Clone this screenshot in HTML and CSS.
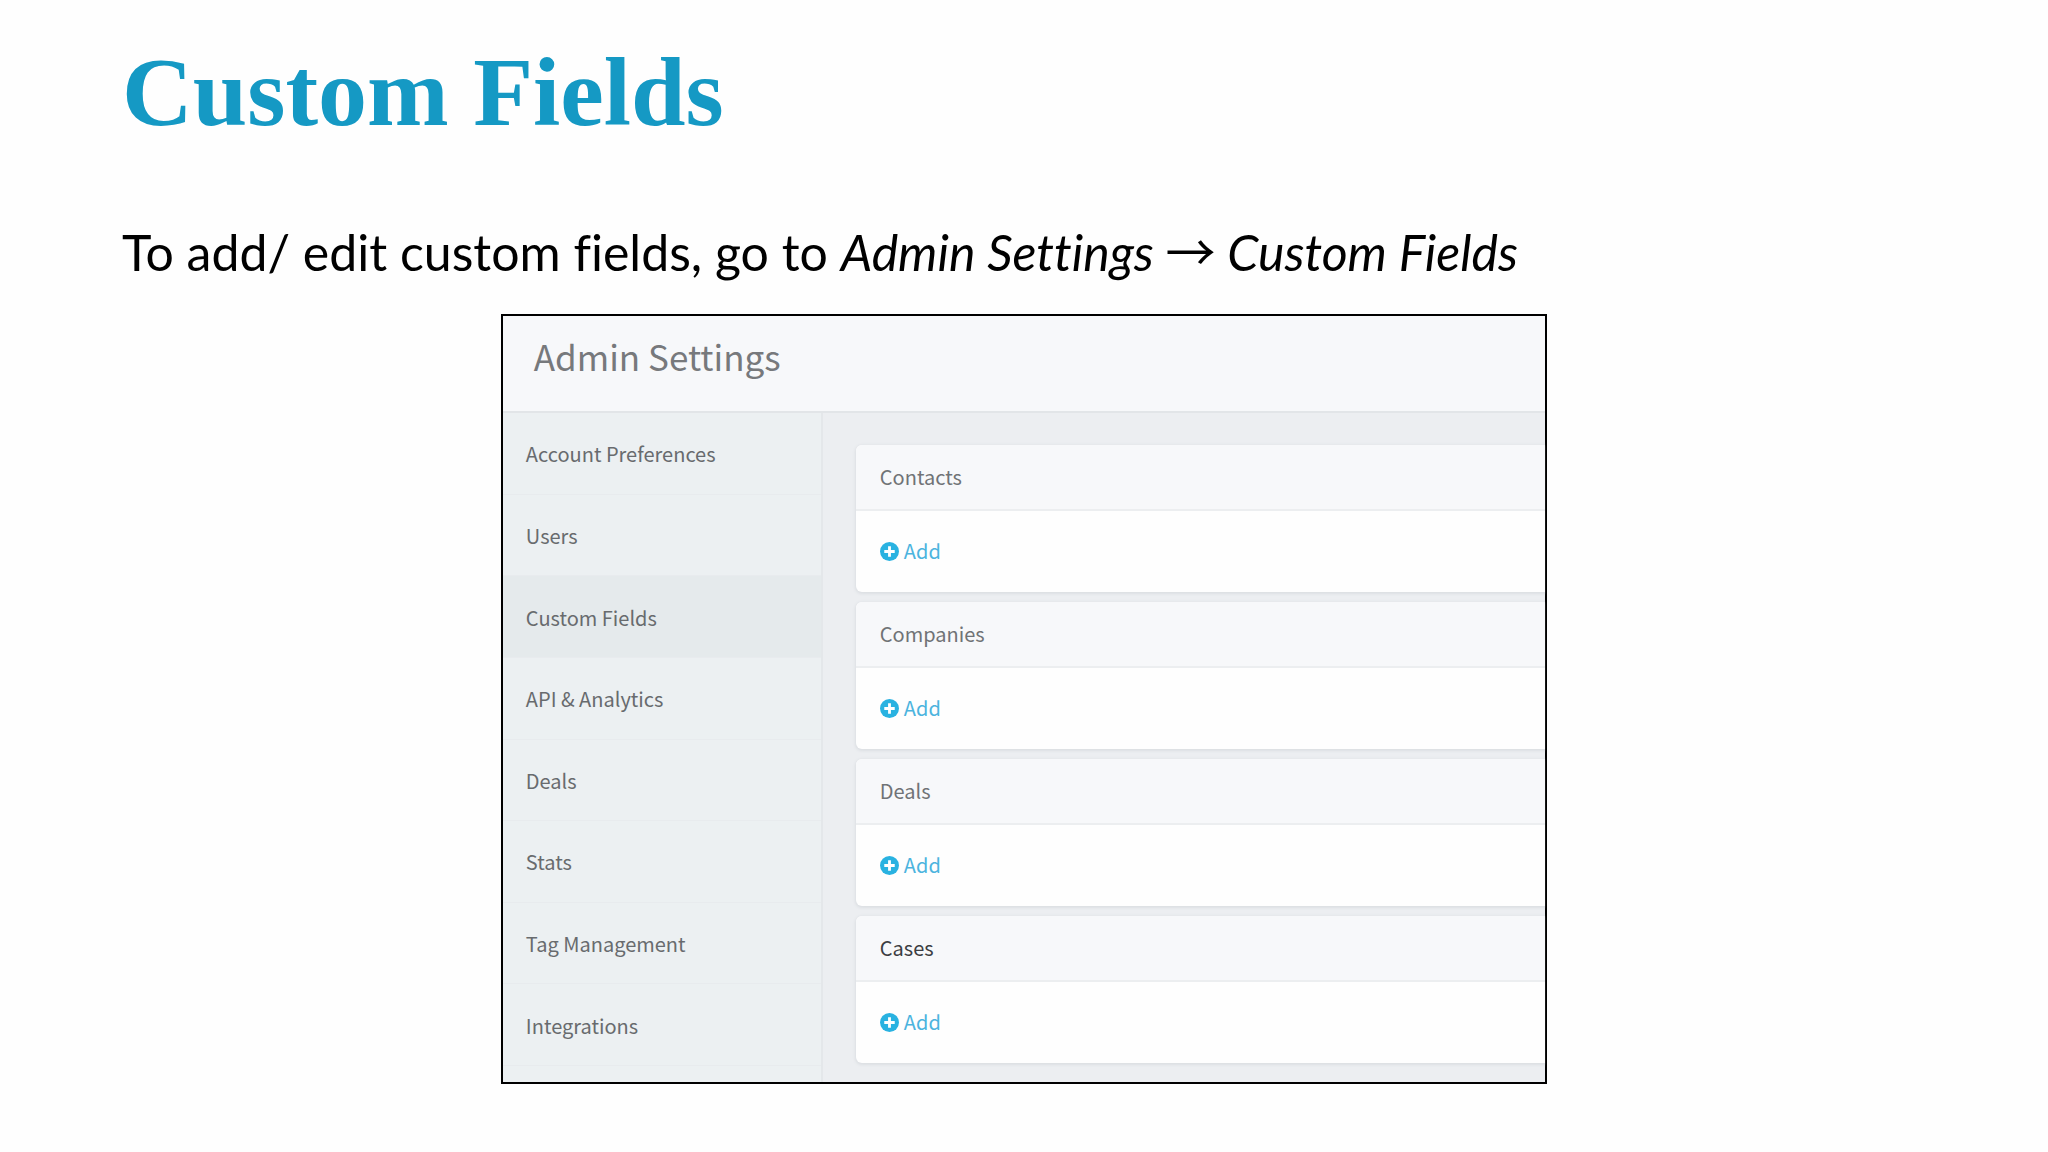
FILE: index.html
```
<!DOCTYPE html>
<html lang="en">
<head>
  <meta charset="UTF-8" />
  <meta name="viewport" content="width=device-width, initial-scale=1.0"/>
  <title>Custom Fields</title>
  <link rel="stylesheet" href="styles.css">
</head>
<body>
  <svg class="sprite" width="0" height="0" aria-hidden="true">
    <symbol id="plus-circle" viewBox="0 0 20 20">
      <circle cx="10" cy="10" r="10" fill="#29b2e1"/>
      <path d="M8.5 4.5h3v4h4v3h-4v4h-3v-4h-4v-3h4z" fill="#fff"/>
    </symbol>
  </svg>

  <main class="slide">
    <h1>Custom Fields</h1>
    <p class="intro">To add/ edit custom fields, go to <em>Admin Settings <span class="arrow">→</span> Custom Fields</em></p>

    <section class="panel">
      <header class="panel-header">
        <h2>Admin Settings</h2>
      </header>

      <div class="panel-body">
        <nav class="sidebar">
          <a href="#">Account Preferences</a>
          <a href="#">Users</a>
          <a href="#" class="active">Custom Fields</a>
          <a href="#">API &amp; Analytics</a>
          <a href="#">Deals</a>
          <a href="#">Stats</a>
          <a href="#">Tag Management</a>
          <a href="#">Integrations</a>
        </nav>

        <div class="cards">
          <article class="card">
            <h3>Contacts</h3>
            <div class="card-body">
              <a href="#" class="add"><svg class="icon"><use href="#plus-circle"/></svg>Add</a>
            </div>
          </article>
          <article class="card">
            <h3>Companies</h3>
            <div class="card-body">
              <a href="#" class="add"><svg class="icon"><use href="#plus-circle"/></svg>Add</a>
            </div>
          </article>
          <article class="card">
            <h3>Deals</h3>
            <div class="card-body">
              <a href="#" class="add"><svg class="icon"><use href="#plus-circle"/></svg>Add</a>
            </div>
          </article>
          <article class="card hover">
            <h3>Cases</h3>
            <div class="card-body">
              <a href="#" class="add"><svg class="icon"><use href="#plus-circle"/></svg>Add</a>
            </div>
          </article>
        </div>
      </div>
    </section>
  </main>
</body>
</html>
```

FILE: styles.css
```
* {
  box-sizing: border-box;
}

body {
  margin: 0;
  background: #fefefe;
  color: #000;
  font-family: 'Lato', sans-serif;
  font-variant-ligatures: none;
}

h1, h2, h3, p {
  margin: 0;
  font-weight: normal;
}

a {
  text-decoration: none;
}

.sprite {
  position: absolute;
}

.slide {
  padding: 36px 122px 66px;
}

h1 {
  color: #1599c4;
  font-family: 'Liberation Serif', serif;
  font-size: 98px;
  font-weight: bold;
  line-height: 112px;
}

.intro {
  margin-top: 71px;
  font-size: 50px;
  line-height: 66px;
}

.arrow {
  font-family: 'Noto Sans CJK SC', sans-serif;
  font-style: normal;
  line-height: 1;
}

.panel {
  width: 58%;
  min-width: 700px;
  margin: 29px auto 0;
  border: 2px solid #000;
  background: #eceef1;
  font-family: 'Noto Sans CJK SC', sans-serif;
  font-size: 20px;
  line-height: 32px;
}

.panel-header {
  padding: 13px 31px 28px;
  border-bottom: 2px solid #e2e5e8;
  background: #f7f8fa;
}

h2 {
  color: #77797c;
  font-size: 35px;
  line-height: 54px;
}

.panel-body {
  display: flex;
}

.sidebar {
  display: flex;
  flex-direction: column;
  flex: 0 0 320px;
  padding-bottom: 16px;
  border-right: 2px solid #e4e7ea;
  background: #ecf0f2;
}

.sidebar a {
  display: flex;
  align-items: center;
  flex: 1;
  padding: 2px 23px 0;
  border-bottom: 1px solid #e8ebee;
  color: #686b6e;
}

.sidebar .active {
  background: #e5eaec;
}

.cards {
  display: flex;
  flex-direction: column;
  flex: 1;
  gap: 10px;
  padding: 32px 0 19px 33px;
}

.card {
  border-radius: 6px 0 0 6px;
  background: #fefefe;
  box-shadow: 0 1px 3px 1px #dcdfe3;
  clip-path: inset(-4px 0 -4px -4px);
}

.card h3 {
  padding: 16px 24px;
  border-bottom: 2px solid #eceef0;
  border-radius: 6px 0 0 0;
  background: #f7f8fa;
  color: #707376;
  font-size: 20px;
}

.card.hover h3 {
  color: #3c3d42;
}

.card-body {
  padding: 24px 24px 25px;
}

.add {
  display: flex;
  align-items: center;
  gap: 5px;
  color: #4cb4de;
}

.icon {
  width: 19px;
  height: 19px;
}
```
